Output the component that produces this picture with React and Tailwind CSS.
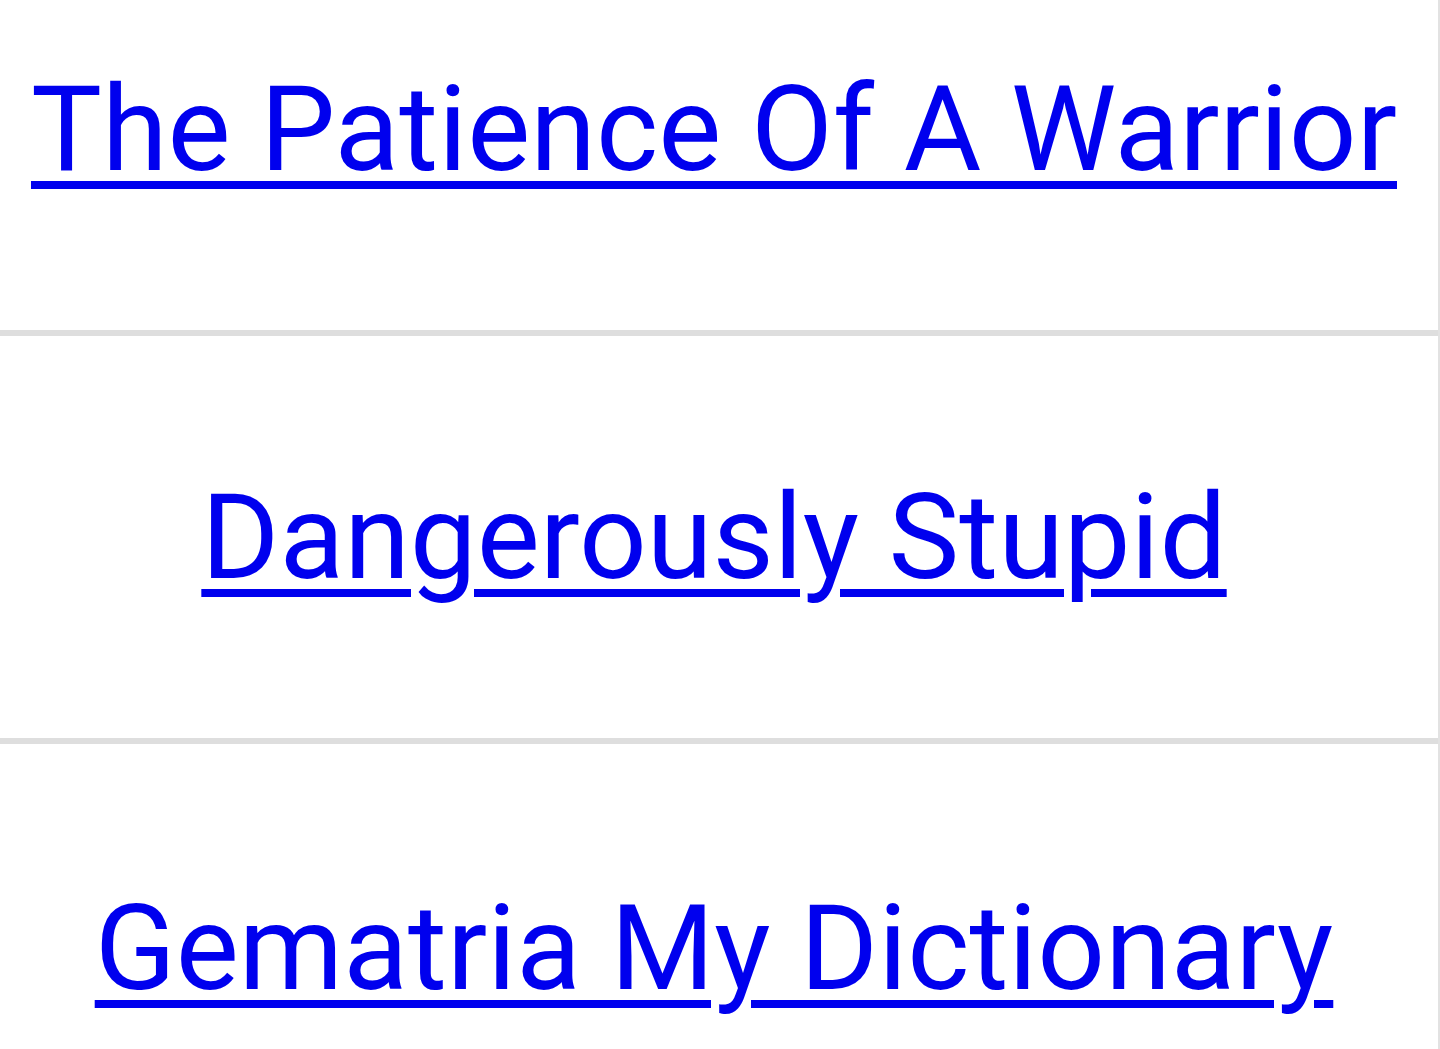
const TITLES = [
  "The Patience Of A Warrior",
  "Dangerously Stupid",
  "Gematria My Dictionary",
];

export default function App() {
  return (
    <div className="h-[1049px] overflow-hidden bg-white font-['Roboto',sans-serif]">
      <div className="w-[1440px] border-r-2 border-[#e2e2e2] -mt-[72px]">
        {TITLES.map((title, i) => (
          <div
            key={title}
            className={`h-[408px] flex items-center justify-center pr-[10px] ${
              i < TITLES.length - 1 ? "border-b-[6px] border-[#dedede]" : ""
            }`}
          >
            <a
              href="#"
              className="text-[119px] leading-none text-[#0000ee] underline decoration-[8px] underline-offset-[11px] whitespace-nowrap"
            >
              {title}
            </a>
          </div>
        ))}
      </div>
    </div>
  );
}
